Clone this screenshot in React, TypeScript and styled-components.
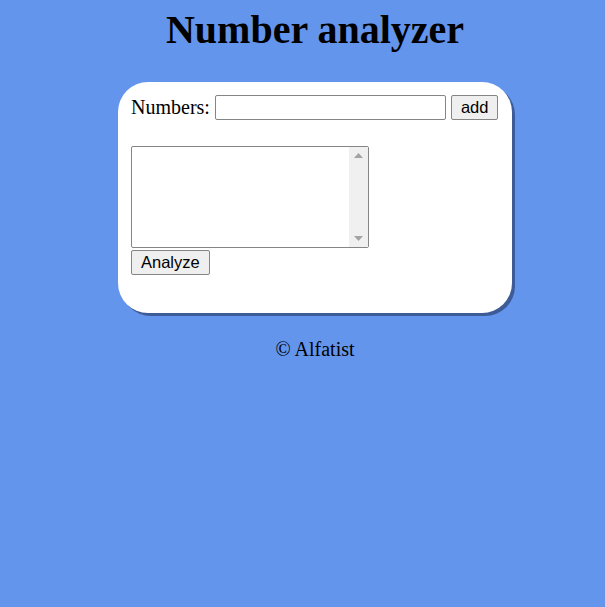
import styled, { createGlobalStyle } from 'styled-components'

const GlobalStyle = createGlobalStyle`
	html, body {
		background: #6495ed;
	}
	body {
		margin: 8px;
		font-family: 'Liberation Serif', 'Times New Roman', serif;
		color: #000;
	}
`

const Page = styled.div`
	display: flex;
	flex-direction: column;
	align-items: center;
	padding-left: 25px;
`

const Title = styled.h1`
	font-size: 40px;
	font-weight: bold;
	line-height: 44px;
	margin: 0 0 30px;
	text-align: center;
`

const Card = styled.div`
	box-sizing: border-box;
	width: 394px;
	padding: 13px 13px 38px;
	background: #ffffff;
	border-radius: 30px;
	box-shadow: 3px 3px 0 #3d5b97;
	display: flex;
	flex-direction: column;
`

const Row = styled.div`
	display: flex;
	align-items: center;
	gap: 5px;
	height: 25px;
`

const Label = styled.label`
	font-size: 20px;
	line-height: 25px;
`

const Input = styled.input`
	box-sizing: border-box;
	width: 231px;
	height: 25px;
	margin: 0;
	border: 1px solid #858585;
	border-radius: 2px;
	padding: 2px 4px;
	font-size: 16px;
`

const Button = styled.button`
	box-sizing: border-box;
	height: 25px;
	margin: 0;
	padding: 1px 9px;
	font-family: 'Liberation Sans', Arial, sans-serif;
	font-size: 16.5px;
	color: #000;
	background: #efefef;
	border: 1px solid #858585;
	border-radius: 2px;
	align-self: flex-start;
`

const AreaWrap = styled.div`
	position: relative;
	width: 238px;
	height: 102px;
	margin: 26px 0 2px;
`

const Area = styled.textarea`
	box-sizing: border-box;
	display: block;
	width: 100%;
	height: 100%;
	margin: 0;
	padding: 2px 21px 2px 3px;
	border: 1px solid #858585;
	border-radius: 2px;
	overflow: hidden;
	resize: none;
`

const Scrollbar = styled.div`
	position: absolute;
	top: 1px;
	right: 1px;
	bottom: 1px;
	width: 19px;
	background: #f0f0f0;
	display: flex;
	flex-direction: column;
	justify-content: space-between;
	align-items: center;
	padding: 6px 0;
	box-sizing: border-box;
	pointer-events: none;
`

const Arrow = styled.svg`
	display: block;
`

const Footer = styled.p`
	font-size: 20px;
	margin: 25px 0 0;
	text-align: center;
`

export default function App() {
	return (
		<>
			<GlobalStyle />
			<Page>
				<Title>Number analyzer</Title>
				<Card>
					<Row>
						<Label>Numbers:</Label>
						<Input type="text" />
						<Button>add</Button>
					</Row>
					<AreaWrap>
						<Area />
						<Scrollbar>
							<Arrow width="9" height="5" viewBox="0 0 9 5">
								<path d="M0 5 L4.5 0 L9 5 Z" fill="#a3a3a3" />
							</Arrow>
							<Arrow width="9" height="5" viewBox="0 0 9 5">
								<path d="M0 0 L9 0 L4.5 5 Z" fill="#a3a3a3" />
							</Arrow>
						</Scrollbar>
					</AreaWrap>
					<Button>Analyze</Button>
				</Card>
				<Footer>© Alfatist</Footer>
			</Page>
		</>
	)
}
